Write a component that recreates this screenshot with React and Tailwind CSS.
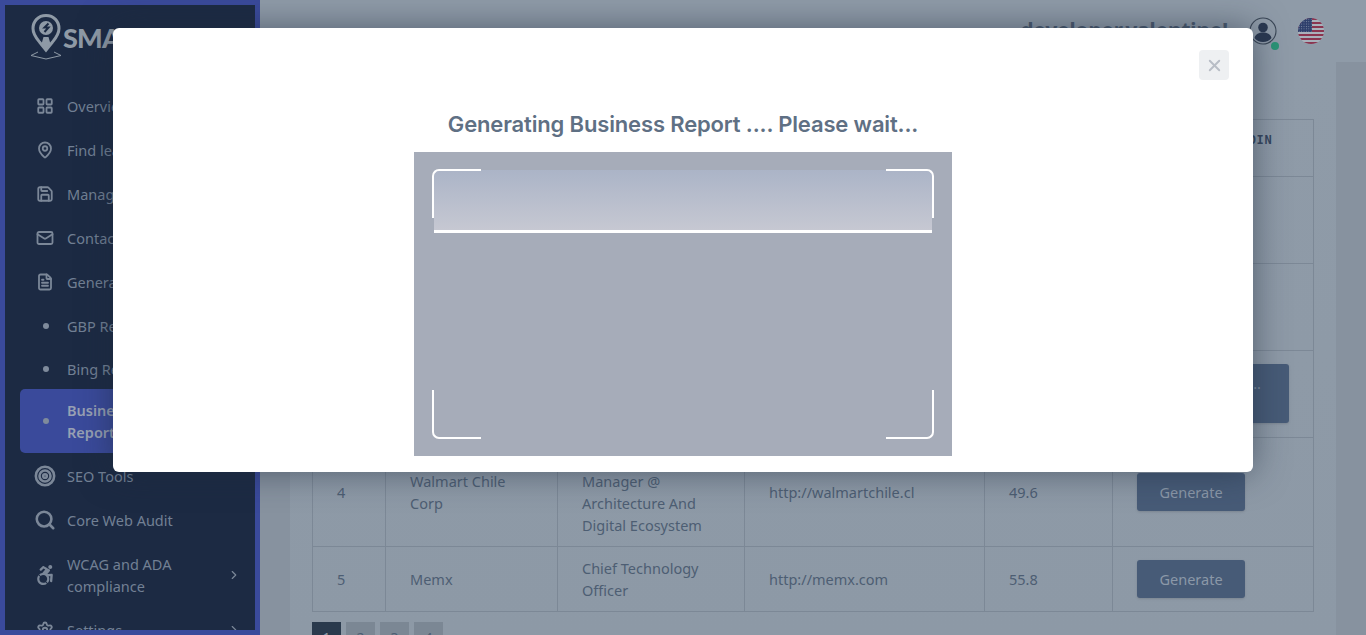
import React from 'react';
import { LayoutGrid, MapPin, Save, Mail, FileText, Target, Search, Settings, ChevronRight, X } from 'lucide-react';
import { FaAccessibleIcon } from 'react-icons/fa';

const NAV = [
  { label: 'Overview', icon: LayoutGrid },
  { label: 'Find leads', icon: MapPin },
  { label: 'Manage leads', icon: Save },
  { label: 'Contacts', icon: Mail },
  { label: 'Generate Reports', icon: FileText },
  { label: 'GBP Reports', dot: true, h: 'h-[44px]' },
  { label: 'Bing Reports', dot: true, h: 'h-[41px]' },
  { label: 'Business Reports', dot: true, active: true, h: 'h-[64px] mb-[1px]' },
  { label: 'SEO Tools', icon: Target, big: true },
  { label: 'Core Web Audit', icon: Search, big: true },
  { label: 'WCAG and ADA compliance', fa: true, arrow: true, h: 'h-[66px]' },
  { label: 'Settings', icon: Settings, arrow: true },
];

const ROWS = [
  { id: 1, company: 'Valentine Optical', title: 'Chief Executive Officer', url: 'http://valentine.com', score: '61.2', h: 'h-[87px]' },
  { id: 2, company: 'Northwind', title: 'Head of Digital', url: 'http://northwind.com', score: '52.4', h: 'h-[87px]' },
  { id: 3, company: 'Acme Retail', title: 'Marketing Director', url: 'http://acmeretail.com', score: '47.3', h: 'h-[87px]', busy: true },
  { id: 4, company: 'Walmart Chile Corp', title: 'Senior Product Manager @ Architecture And Digital Ecosystem', url: 'http://walmartchile.cl', score: '49.6' },
  { id: 5, company: 'Memx', title: 'Chief Technology Officer', url: 'http://memx.com', score: '55.8' },
];

const HEADERS = ['#', 'COMPANY', 'TITLE', 'WEBSITE', 'SCORE', 'GENERATE LINKEDIN'];

function Logo() {
  return (
    <div className="flex items-center h-[62px] pl-[24px] mb-[17px] shrink-0">
      <svg width="36" height="46" viewBox="0 0 36 46" fill="none" className="shrink-0 mt-[2px]">
        <path d="M17 1.500C9 1.500 4 7.500 4 14.500c0 6 3.500 10 6.500 13.500l6.500 8 6.500-8c3-3.500 6.500-7.500 6.500-13.500 0-7-5-13-13-13z" stroke="#8f9aa6" strokeWidth="3" />
        <circle cx="17" cy="14" r="7" fill="#8f9aa6" />
        <path d="M19.500 9.500l-4 4h4l-4 4.500" stroke="#1c2a43" strokeWidth="2" />
        <path d="M14.500 23h5l2 7-4.500 6-4.500-6z" fill="#8f9aa6" />
        <path d="M9 38l-7 3.500 15 3.500 15-3.500-7-3.500" stroke="#8f9aa6" strokeWidth="1" />
      </svg>
      <span className="text-[#8f9aa6] font-black text-[27px] tracking-[-0.800px] -ml-[2px] mt-[4px] font-['Lato',sans-serif]">SMART</span>
    </div>
  );
}

function NavItem({ item }) {
  const Icon = item.icon;
  return (
    <div className={`flex items-center mx-[15px] pl-[17px] rounded-[5px] text-[14.500px] leading-[22px] shrink-0 ${item.h || 'h-[44px]'} ${item.active ? 'bg-[#3a4a9b] font-semibold text-[#98a1b4]' : 'text-[#728094]'}`}>
      <span className="w-[30px] shrink-0 flex items-center">
        {item.dot && <span className="ml-[6px] w-[6px] h-[6px] rounded-full bg-[#7f8b9c]" />}
        {Icon && !item.big && <Icon size={18} strokeWidth={2.400} className="-ml-[1px] text-[#7b8798]" />}
        {Icon && item.big && <Icon size={22} strokeWidth={2.800} className="-ml-[3px] text-[#7b8798]" />}
        {item.fa && <FaAccessibleIcon size={20} className="-ml-[2px] text-[#7b8798]" />}
      </span>
      <span className={item.active ? 'w-[90px]' : 'flex-1 pr-[14px]'}>{item.label}</span>
      {item.arrow && <ChevronRight size={14} className="-mr-[1px] text-[#7b8798]" />}
    </div>
  );
}

function Sidebar() {
  return (
    <aside className="w-[260px] h-[635px] shrink-0 border-[5px] border-[#3a4a9b] bg-[#1c2a43] overflow-hidden flex flex-col">
      <Logo />
      {NAV.map(item => <NavItem key={item.label} item={item} />)}
    </aside>
  );
}

function Avatar() {
  return (
    <div className="relative w-[28px] h-[28px]">
      <svg width="28" height="28" viewBox="0 0 28 28" fill="none">
        <circle cx="14" cy="14" r="13" stroke="#3a4656" strokeWidth="1.100" />
        <circle cx="14" cy="10.500" r="4.800" fill="#2a3850" />
        <path d="M5.500 21c1-4 4.500-5.500 8.500-5.500s7.500 1.500 8.500 5.500c-2 2.500-5 4-8.500 4s-6.500-1.500-8.500-4z" fill="#2a3850" />
      </svg>
      <span className="absolute -right-[2px] -bottom-[5px] w-[8px] h-[8px] rounded-full bg-[#2a9476]" />
    </div>
  );
}

function Flag() {
  const stripes = [0, 1, 2, 3, 4, 5, 6];
  return (
    <svg width="26" height="26" viewBox="0 0 26 26">
      <defs>
        <clipPath id="flag-clip"><circle cx="13" cy="13" r="13" /></clipPath>
        <pattern id="stars" width="2.400" height="2.400" patternUnits="userSpaceOnUse">
          <rect width="2.400" height="2.400" fill="#2e3f6c" />
          <circle cx="1.200" cy="1.200" r="0.500" fill="#8f9bb0" />
        </pattern>
      </defs>
      <g clipPath="url(#flag-clip)">
        <rect width="26" height="26" fill="#a9b1bb" />
        {stripes.map(i => <rect key={i} y={i * 4} width="26" height="2" fill="#8a3550" />)}
        <rect width="14" height="14" fill="url(#stars)" />
      </g>
    </svg>
  );
}

function ReportTable() {
  return (
    <table className="w-[1001px] table-fixed border-collapse text-[14.500px] leading-[22px] text-[#4d5e73] border border-[#7c8896]">
      <colgroup>
        <col className="w-[73px]" />
        <col className="w-[172px]" />
        <col className="w-[187px]" />
        <col className="w-[240px]" />
        <col className="w-[128px]" />
        <col className="w-[201px]" />
      </colgroup>
      <thead>
        <tr className="h-[57px]">
          {HEADERS.map(h => (
            <th key={h} className="border border-[#7c8896] px-[24px] text-left align-top pt-[12px] text-[12px] leading-[16px] tracking-[0.750px] font-bold text-[#35465e] font-['DejaVu_Sans_Mono',monospace] whitespace-nowrap">{h}</th>
          ))}
        </tr>
      </thead>
      <tbody>
        {ROWS.map(r => (
          <tr key={r.id} className={r.h}>
            <td className="border border-[#7c8896] px-[24px] py-[10px]">{r.id}</td>
            <td className="border border-[#7c8896] px-[24px] py-[10px]">{r.company}</td>
            <td className="border border-[#7c8896] px-[24px] py-[10px]">{r.title}</td>
            <td className="border border-[#7c8896] px-[24px] py-[10px]">{r.url}</td>
            <td className="border border-[#7c8896] px-[24px] py-[10px]">{r.score}</td>
            <td className="border border-[#7c8896] px-[24px] py-[10px]">
              {r.busy
                ? <button className="block w-[152px] h-[59px] -mt-[1px] rounded-[3px] bg-[#475b77] text-[#7e8c9e] shadow-sm">Generating ....<br />Report</button>
                : <button className="block w-[108px] h-[38px] rounded-[3px] bg-[#475b77] text-[#8b98a8] shadow-sm">Generate</button>}
            </td>
          </tr>
        ))}
      </tbody>
    </table>
  );
}

function Pagination() {
  return (
    <div className="flex gap-[5px] mt-[10px] text-[14px] text-[#4d5e73]">
      {[1, 2, 3, 4].map(n => (
        <span key={n} className={`w-[29px] h-[30px] flex items-center justify-center ${n === 1 ? 'bg-[#2a3a4d] text-[#8f9ba8]' : 'bg-[#7b8794]'}`}>{n}</span>
      ))}
    </div>
  );
}

function ReportModal() {
  return (
    <div className="absolute left-[113px] top-[28px] w-[1140px] h-[444px] bg-white rounded-[6px] shadow-[0_0_34px_rgba(30,42,60,0.55)] flex flex-col items-center">
      <button className="absolute right-[24px] top-[22px] w-[30px] h-[30px] rounded-[4px] bg-[#eef0f2] flex items-center justify-center text-[#b8bdc6]">
        <X size={19} strokeWidth={2.400} />
      </button>
      <h2 className="mt-[81px] h-[30px] leading-[30px] text-[22px] font-semibold text-[#5f7084] font-['Inter',sans-serif] tracking-[-0.150px]">Generating Business Report .... Please wait...</h2>
      <div className="relative mt-[13px] w-[538px] h-[304px] bg-[#a6acb9]">
        <div className="absolute left-[20px] top-[18px] w-[498px] h-[63px] bg-gradient-to-b from-[#abb4c7] to-[#c6c8d2] border-b-[3px] border-white" />
        <span className="absolute left-[18px] top-[17px] w-[49px] h-[49px] border-l-2 border-t-2 border-white rounded-tl-[7px]" />
        <span className="absolute left-[472px] top-[17px] w-[48px] h-[49px] border-r-2 border-t-2 border-white rounded-tr-[7px]" />
        <span className="absolute left-[18px] top-[238px] w-[49px] h-[49px] border-l-2 border-b-2 border-white rounded-bl-[7px]" />
        <span className="absolute left-[472px] top-[238px] w-[48px] h-[49px] border-r-2 border-b-2 border-white rounded-br-[7px]" />
      </div>
    </div>
  );
}

export default function App() {
  return (
    <div className="relative flex h-[635px] overflow-hidden bg-[#87929f] font-['Noto_Sans',sans-serif]">
      <Sidebar />
      <div className="flex-1 flex flex-col min-w-0">
        <header className="h-[62px] shrink-0 bg-[#8f9ba8] flex items-center justify-end pr-[42px] gap-[21px]">
          <span className="text-[20.600px] -mt-[2px] font-bold text-[#4a5a6e]">developer.valentine!</span>
          <Avatar />
          <Flag />
        </header>
        <div className="flex-1 flex px-[30px] min-h-0">
          <main className="flex-1 bg-gradient-to-b from-[#8f9ba8] to-[#8d99a6] pt-[57px] px-[22px]">
            <ReportTable />
            <Pagination />
          </main>
        </div>
      </div>
      <ReportModal />
    </div>
  );
}
